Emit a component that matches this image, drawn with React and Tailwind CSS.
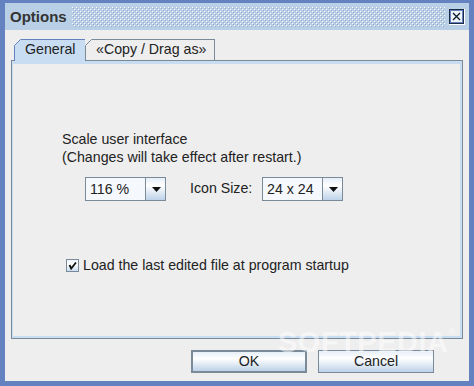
import React from "react";

function Bumps() {
  return (
    <svg width="100%" height="100%" className="block">
      <defs>
        <pattern id="bumps" width="4" height="4" patternUnits="userSpaceOnUse">
          <rect x="0" y="0" width="1" height="1" fill="#ffffff" />
          <rect x="2" y="2" width="1" height="1" fill="#ffffff" />
          <rect x="1" y="1" width="1" height="1" fill="#8fa9cf" />
          <rect x="3" y="3" width="1" height="1" fill="#8fa9cf" />
        </pattern>
      </defs>
      <rect width="100%" height="100%" fill="url(#bumps)" />
    </svg>
  );
}

function CloseIcon() {
  return (
    <svg width="16" height="16" viewBox="0 0 16 16" className="block">
      <rect x="0.5" y="0.5" width="15" height="15" fill="#ffffff" stroke="#ffffff" />
      <rect x="0.5" y="0.5" width="14" height="14" fill="#c8ddf2" stroke="#1c2b48" />
      <rect x="1.5" y="1.5" width="12" height="12" fill="#eef4fa" stroke="#6382bf" />
      <path d="M4 4 L11 11 M11 4 L4 11" stroke="#111c33" strokeWidth="1.4" />
    </svg>
  );
}

function Corner({ color }) {
  return (
    <svg width="7" height="7" viewBox="0 0 7 7" className="absolute -left-px -top-px block">
      <polygon points="0,0 7,0 0,7" fill="#eeeeee" />
      <path d="M0.5 6.5 L6.5 0.5" stroke={color} strokeWidth="1" />
    </svg>
  );
}

function Arrow() {
  return (
    <svg width="9" height="5" viewBox="0 0 9 5" className="block">
      <polygon points="0,0 9,0 4.5,5" fill="#111111" />
    </svg>
  );
}

function Combo({ value }) {
  return (
    <div className="w-[81px] h-[24px] border border-[#7a8a99] flex shrink-0">
      <div className="flex-1 bg-[#f5f8fc] pl-[4px] leading-[22px]">{value}</div>
      <div className="w-[20px] border-l border-[#7a8a99] bg-[linear-gradient(to_bottom,#e6eef7,#ffffff_35%,#bdd2e8)] flex items-center justify-center pl-[1px]">
        <Arrow />
      </div>
    </div>
  );
}

export default function App() {
  return (
    <div className="w-[474px] h-[386px] bg-[#6382bf] pt-[3px] pl-[5px] pr-[5px] pb-[5px] flex flex-col relative overflow-hidden font-['Liberation_Sans',Arial,sans-serif] text-[14.2px] text-[#222222]">
      {/* Title bar */}
      <div className="h-[27px] shrink-0 bg-[#b8cfe5] flex items-center pl-[5px] pr-[4px]">
        <span className="font-bold text-[15px] text-[#333333] leading-none">Options</span>
        <div className="flex-1 h-[20px] ml-[5px] mr-[4px]">
          <Bumps />
        </div>
        <CloseIcon />
      </div>

      {/* Content */}
      <div className="flex-1 bg-[#eeeeee] flex flex-col px-[6px] pt-[9px]">
        {/* Tabs */}
        <div className="h-[21px] flex items-start pl-[3px] relative z-10">
          <div className="relative w-[72px] h-[22px] bg-[#c8ddf2] border-t border-l border-r border-[#6382bf] pl-[10px] leading-[19px]">
            <Corner color="#6382bf" />
            General
          </div>
          <div className="relative w-[130px] h-[21px] border-t border-l border-r border-[#7a8a99] pl-[10px] leading-[19px] -ml-px">
            <Corner color="#7a8a99" />
            «Copy / Drag as»
          </div>
        </div>

        {/* Panel */}
        <div className="h-[279px] shrink-0 border border-[#7a8a99]">
          <div className="h-full border-l border-t-[3px] border-r-[2px] border-b-[2px] border-[#c8ddf2] pl-[49px] pt-[66px] flex flex-col">
            <div className="leading-[18px]">Scale user interface</div>
            <div className="leading-[18px]">(Changes will take effect after restart.)</div>
            <div className="flex items-center mt-[11px] pl-[23px]">
              <Combo value="116 %" />
              <div className="ml-[24px] w-[72px]">Icon Size:</div>
              <Combo value="24 x 24" />
            </div>
            <div className="flex items-center mt-[55px] pl-[4px] h-[18px]">
              <div className="w-[13px] h-[13px] border border-[#7a8a99] bg-[linear-gradient(to_bottom,#eef4fa,#ffffff_40%,#c8ddf2)] flex items-center justify-center">
                <svg width="11" height="11" viewBox="0 0 11 11" className="block">
                  <path d="M2.5 5 L4.2 8.5 L9 2.5" stroke="#111111" strokeWidth="1.8" fill="none" />
                </svg>
              </div>
              <span className="ml-[4px] leading-[18px]">Load the last edited file at program startup</span>
            </div>
          </div>
        </div>

        {/* Buttons */}
        <div className="flex justify-end gap-[11px] pr-[29px] pt-[11px]">
          <div className="w-[116px] h-[23px] border-2 border-[#7a8a99] bg-[linear-gradient(to_bottom,#e6eef7,#ffffff_35%,#bdd2e8)] flex items-center justify-center">
            OK
          </div>
          <div className="w-[116px] h-[23px] border border-[#7a8a99] bg-[linear-gradient(to_bottom,#e6eef7,#ffffff_35%,#bdd2e8)] flex items-center justify-center">
            Cancel
          </div>
        </div>
      </div>

      {/* Watermark */}
      <div className="absolute left-[278px] top-[328px] text-[29px] font-bold text-white/50 pointer-events-none leading-none tracking-[0.5px]">
        SOFTPEDIA<span className="text-[9px] align-top">®</span>
      </div>
    </div>
  );
}
